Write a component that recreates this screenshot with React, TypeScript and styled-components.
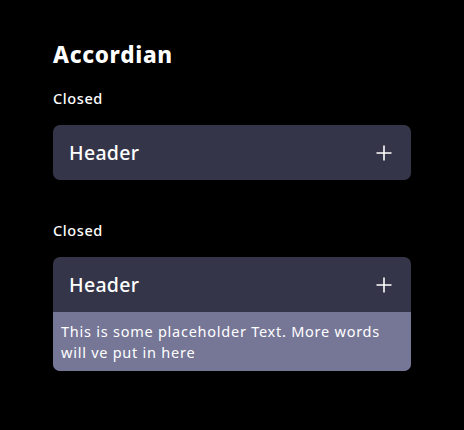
import React from "react";
import styled, { createGlobalStyle } from "styled-components";

const Global = createGlobalStyle`
  html, body { margin: 0; padding: 0; background: #000; }
  body { font-family: "Noto Sans", "Open Sans", sans-serif; color: #fff; }
`;

const Page = styled.div`
  width: 464px;
  height: 430px;
  box-sizing: border-box;
  padding: 39px 53px 0 53px;
  display: flex;
  flex-direction: column;
`;

const Title = styled.h1`
  margin: 0;
  font-size: 22.5px;
  line-height: 32px;
  font-weight: 800;
  letter-spacing: 0.7px;
`;

const Section = styled.section<{ $top: number }>`
  margin-top: ${(p) => p.$top}px;
  display: flex;
  flex-direction: column;
  gap: 17px;
`;

const Label = styled.div`
  font-size: 14.5px;
  line-height: 20px;
  font-weight: 500;
  letter-spacing: 0.6px;
`;

const Card = styled.div`
  width: 358px;
  border-radius: 7px;
  overflow: hidden;
  background: #353549;
`;

const HeaderRow = styled.div`
  height: 55px;
  display: flex;
  align-items: center;
  justify-content: space-between;
  padding: 0 19px 0 16px;
  font-size: 19.5px;
  font-weight: 500;
  letter-spacing: 0.3px;
`;

const Body = styled.div`
  background: #767697;
  padding: 9px 8px 8px 8px;
  font-size: 14.5px;
  line-height: 21px;
  font-weight: 450;
  letter-spacing: 0.75px;
`;

const Plus = () => (
  <svg width="16" height="16" viewBox="0 0 16 16">
    <path d="M8 0.5V15.5M0.5 8H15.5" stroke="#fff" strokeWidth="1.6" />
  </svg>
);

export default function App() {
  return (
    <>
      <Global />
      <Page>
        <Title>Accordian</Title>
        <Section $top={17}>
          <Label>Closed</Label>
          <Card>
            <HeaderRow>
              <span>Header</span>
              <Plus />
            </HeaderRow>
          </Card>
        </Section>
        <Section $top={40}>
          <Label>Closed</Label>
          <Card>
            <HeaderRow>
              <span>Header</span>
              <Plus />
            </HeaderRow>
            <Body>This is some placeholder Text. More words will ve put in here</Body>
          </Card>
        </Section>
      </Page>
    </>
  );
}
